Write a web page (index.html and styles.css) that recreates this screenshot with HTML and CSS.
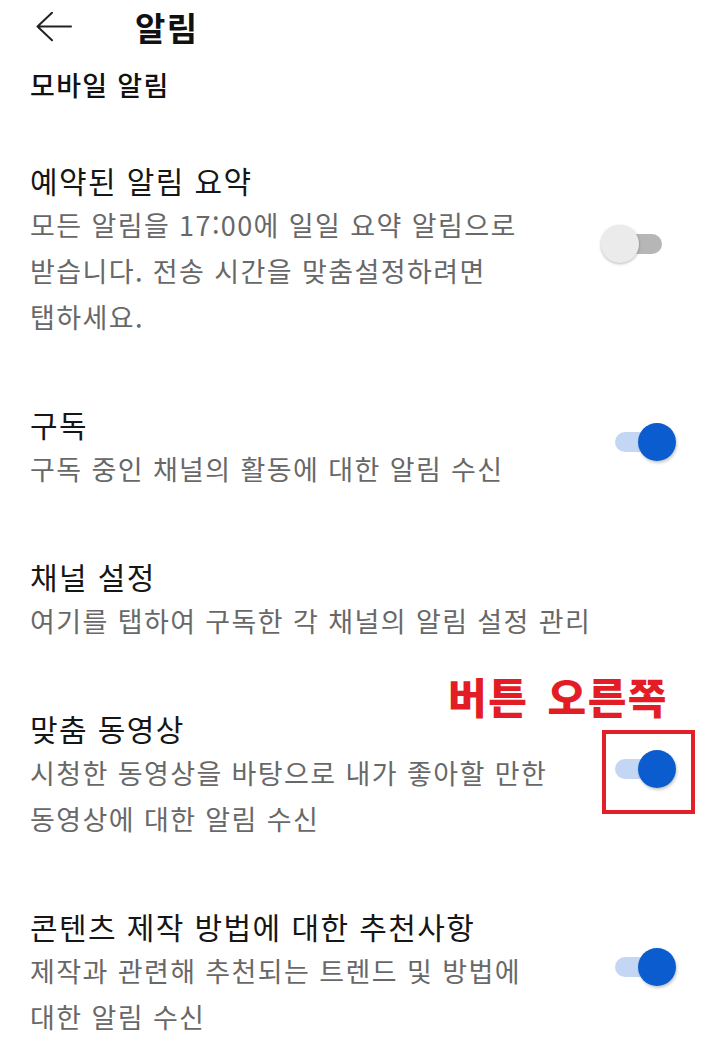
FILE: index.html
```html
<!DOCTYPE html>
<html lang="ko">
<head>
<meta charset="utf-8">
<title>알림</title>
<link rel="stylesheet" href="styles.css">
</head>
<body>
<header class="header">
  <svg class="back" width="36" height="30" viewBox="0 0 36 30" aria-hidden="true">
    <path d="M35 14.5 H1.5 M16 0.8 L1.5 14.5 L16 28.2" fill="none" stroke="#222" stroke-width="2" stroke-linecap="round" stroke-linejoin="round"/>
  </svg>
  <h1 class="page-title">알림</h1>
</header>

<h2 class="section-title">모바일 알림</h2>

<ul class="list">
  <li class="item">
    <div class="text">
      <div class="title">예약된 알림 요약</div>
      <div class="desc">모든 알림을 17:00에 일일 요약 알림으로<br>받습니다. 전송 시간을 맞춤설정하려면<br>탭하세요.</div>
    </div>
    <div class="switch off"><span class="track"></span><span class="thumb"></span></div>
  </li>
  <li class="item">
    <div class="text">
      <div class="title">구독</div>
      <div class="desc">구독 중인 채널의 활동에 대한 알림 수신</div>
    </div>
    <div class="switch on"><span class="track"></span><span class="thumb"></span></div>
  </li>
  <li class="item">
    <div class="text">
      <div class="title">채널 설정</div>
      <div class="desc">여기를 탭하여 구독한 각 채널의 알림 설정 관리</div>
    </div>
  </li>
  <li class="item">
    <div class="text">
      <div class="title">맞춤 동영상</div>
      <div class="desc">시청한 동영상을 바탕으로 내가 좋아할 만한<br>동영상에 대한 알림 수신</div>
    </div>
    <div class="switch on"><span class="track"></span><span class="thumb"></span>
      <span class="annot-text">버튼 오른쪽</span>
      <span class="annot-box"></span>
    </div>
  </li>
  <li class="item">
    <div class="text">
      <div class="title">콘텐츠 제작 방법에 대한 추천사항</div>
      <div class="desc">제작과 관련해 추천되는 트렌드 및 방법에<br>대한 알림 수신</div>
    </div>
    <div class="switch on"><span class="track"></span><span class="thumb"></span></div>
  </li>
</ul>
</body>
</html>
```

FILE: styles.css
```css
html, body {
  margin: 0;
  padding: 0;
  background: #ffffff;
}

body {
  font-family: "Noto Sans CJK KR", "Noto Sans", sans-serif;
  color: #111111;
  width: 720px;
  overflow: hidden;
}

.header {
  display: flex;
  align-items: center;
  height: 54px;
  padding-left: 36px;
}

.back {
  display: block;
  flex: none;
}

.page-title {
  margin: 0 0 0 63px;
  font-size: 33px;
  font-weight: 700;
  line-height: 54px;
  letter-spacing: 1.5px;
  color: #111111;
}

.section-title {
  margin: 11px 0 0 30px;
  font-size: 27px;
  font-weight: 500;
  line-height: 40px;
  letter-spacing: 1.3px;
  color: #111111;
}

.list {
  list-style: none;
  margin: 22px 0 0 0;
  padding: 0;
}

.item {
  display: flex;
  align-items: center;
  padding: 31px 44px 31px 30px;
}

.text {
  flex: 1;
  min-width: 0;
  white-space: nowrap;
}

.title {
  font-size: 30px;
  line-height: 44px;
  letter-spacing: 1.4px;
  color: #161616;
}

.desc {
  font-size: 27px;
  line-height: 46px;
  letter-spacing: 1.4px;
  color: #686868;
}

.switch {
  position: relative;
  flex: none;
  width: 75px;
  height: 38px;
  margin-bottom: 10px;
}

.track {
  position: absolute;
  left: 14px;
  right: 14px;
  top: 9px;
  height: 20px;
  border-radius: 10px;
}

.thumb {
  position: absolute;
  top: 0;
  width: 38px;
  height: 38px;
  border-radius: 50%;
}

.switch.off .track {
  background: #b6b6b6;
}

.switch.off .thumb {
  left: 0;
  background: #ebebeb;
  box-shadow: 0 1px 3px rgba(0, 0, 0, 0.28);
}

.switch.on .track {
  background: #c3d6f4;
}

.switch.on .thumb {
  right: 0;
  background: #0b5dcf;
  box-shadow: 1px 2px 3px rgba(0, 0, 0, 0.22);
}

.annot-text {
  position: absolute;
  left: -153px;
  top: -75px;
  font-size: 42px;
  font-weight: 900;
  line-height: 42px;
  letter-spacing: 1.5px;
  word-spacing: 6px;
  color: #e31d25;
  white-space: nowrap;
}

.annot-box {
  position: absolute;
  left: 1px;
  top: -20px;
  width: 93px;
  height: 84px;
  box-sizing: border-box;
  border: 4px solid #e3202a;
}
```
